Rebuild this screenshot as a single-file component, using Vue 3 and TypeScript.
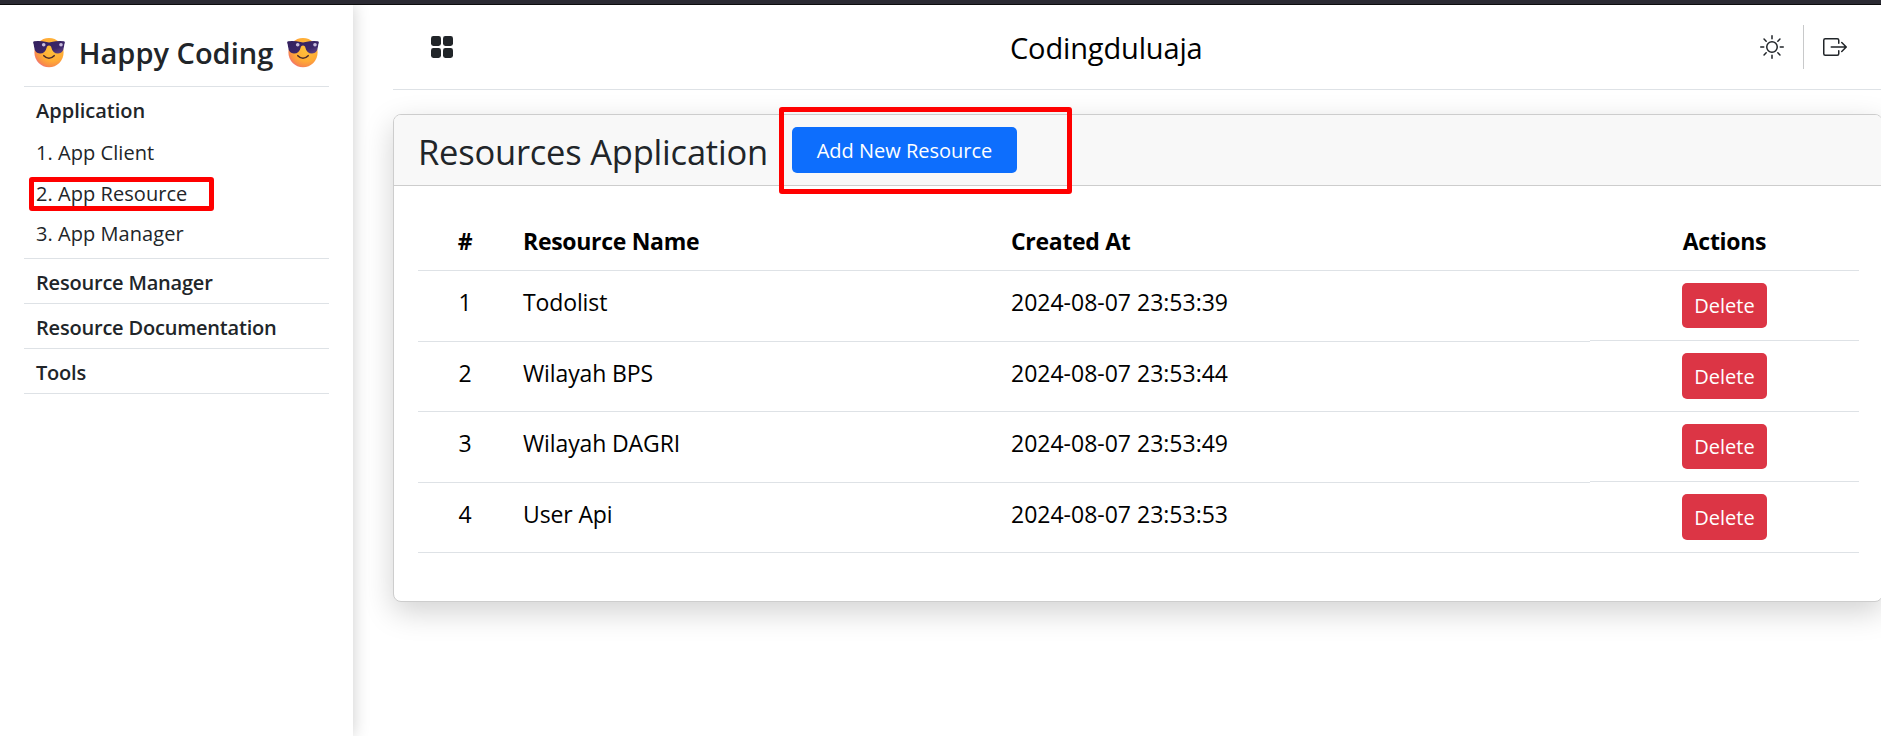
<script setup lang="ts">
interface Resource {
  id: number
  name: string
  createdAt: string
}

const appLinks: string[] = ['1. App Client', '2. App Resource', '3. App Manager']
const sections: string[] = ['Resource Manager', 'Resource Documentation', 'Tools']
const resources: Resource[] = [
  { id: 1, name: 'Todolist', createdAt: '2024-08-07 23:53:39' },
  { id: 2, name: 'Wilayah BPS', createdAt: '2024-08-07 23:53:44' },
  { id: 3, name: 'Wilayah DAGRI', createdAt: '2024-08-07 23:53:49' },
  { id: 4, name: 'User Api', createdAt: '2024-08-07 23:53:53' },
]
</script>

<template>
  <div class="page">
    <svg class="defs" width="0" height="0" aria-hidden="true">
      <defs>
        <radialGradient id="face" cx="62%" cy="38%" r="70%">
          <stop offset="0" stop-color="#ffc23a" />
          <stop offset=".6" stop-color="#ffab36" />
          <stop offset=".86" stop-color="#f88b4a" />
          <stop offset="1" stop-color="#ee6a86" />
        </radialGradient>
        <linearGradient id="lens" x1="0" y1="0" x2="1" y2="1">
          <stop offset="0" stop-color="#33205e" />
          <stop offset=".65" stop-color="#3c2668" />
          <stop offset="1" stop-color="#6a4b8e" />
        </linearGradient>
        <symbol id="cool" viewBox="0 0 32 30">
          <circle cx="16" cy="14.6" r="14.6" fill="url(#face)" />
          <path d="M1 3.2Q8 2.600 13.500 4Q16 4.800 18.500 4Q24 2.600 31 3.200Q32.200 3.600 31.700 5.200Q31.200 6 31 8.500Q30.200 15.500 25 15.500Q19.600 15.500 18 8.400Q16 6.600 14 8.400Q12.400 15.500 7 15.500Q1.800 15.500 1 8.500Q.8 6 .3 5.200Q-.2 3.600 1 3.200Z" fill="url(#lens)" />
          <circle cx="10.7" cy="6.800" r="1.8" fill="#c8bbdc" />
          <circle cx="28" cy="6.800" r="1.8" fill="#c8bbdc" />
          <path d="M10.8 17.700Q16 22.800 21.200 17.700" fill="none" stroke="#4b2b2b" stroke-width="1.6" stroke-linecap="round" />
        </symbol>
      </defs>
    </svg>

    <div class="chrome"></div>
    <div class="layout">
      <aside class="sidebar">
        <div class="brand">
          <svg class="emoji"><use href="#cool" /></svg>
          <span class="brand-name">Happy Coding</span>
          <svg class="emoji"><use href="#cool" /></svg>
        </div>
        <div class="group open">
          <div class="group-title">Application</div>
          <a v-for="(link, i) in appLinks" :key="link" class="link">
            {{ link }}
            <span v-if="i === 1" class="mark mark-link"></span>
          </a>
        </div>
        <div v-for="s in sections" :key="s" class="group">
          <div class="group-title tight">{{ s }}</div>
        </div>
      </aside>

      <main class="main">
        <header class="topbar">
          <svg class="menu" width="22" height="22" viewBox="0 0 22 22" fill="#212529">
            <rect x="0" y="0" width="10" height="10" rx="2.4" />
            <rect x="12" y="0" width="10" height="10" rx="2.4" />
            <rect x="0" y="12" width="10" height="10" rx="2.4" />
            <rect x="12" y="12" width="10" height="10" rx="2.4" />
          </svg>
          <div class="site">Codingduluaja</div>
          <div class="tools">
            <svg width="24" height="24" viewBox="0 0 16 16" fill="#212529">
              <path d="M8 11a3 3 0 1 1 0-6 3 3 0 0 1 0 6m0 1a4 4 0 1 0 0-8 4 4 0 0 0 0 8M8 0a.5.5 0 0 1 .5.5v2a.5.5 0 0 1-1 0v-2A.5.5 0 0 1 8 0m0 13a.5.5 0 0 1 .5.5v2a.5.5 0 0 1-1 0v-2A.5.5 0 0 1 8 13m8-5a.5.5 0 0 1-.5.5h-2a.5.5 0 0 1 0-1h2a.5.5 0 0 1 .5.5M3 8a.5.5 0 0 1-.5.5h-2a.5.5 0 0 1 0-1h2A.5.5 0 0 1 3 8m10.657-5.657a.5.5 0 0 1 0 .707l-1.414 1.415a.5.5 0 1 1-.707-.708l1.414-1.414a.5.5 0 0 1 .707 0m-9.193 9.193a.5.5 0 0 1 0 .707L3.05 13.657a.5.5 0 0 1-.707-.707l1.414-1.414a.5.5 0 0 1 .707 0m9.193 2.121a.5.5 0 0 1-.707 0l-1.414-1.414a.5.5 0 0 1 .707-.707l1.414 1.414a.5.5 0 0 1 0 .707M4.464 4.465a.5.5 0 0 1-.707 0L2.343 3.05a.5.5 0 1 1 .707-.707l1.414 1.414a.5.5 0 0 1 0 .708" />
            </svg>
            <span class="divider"></span>
            <svg width="24" height="24" viewBox="0 0 16 16" fill="#212529" fill-rule="evenodd">
              <path d="M10 12.5a.5.5 0 0 1-.5.5h-8a.5.5 0 0 1-.5-.5v-9a.5.5 0 0 1 .5-.5h8a.5.5 0 0 1 .5.5v2a.5.5 0 0 0 1 0v-2A1.5 1.5 0 0 0 9.5 2h-8A1.5 1.5 0 0 0 0 3.5v9A1.5 1.5 0 0 0 1.5 14h8a1.5 1.5 0 0 0 1.5-1.5v-2a.5.5 0 0 0-1 0z" />
              <path d="M15.854 8.354a.5.5 0 0 0 0-.708l-3-3a.5.5 0 0 0-.708.708L14.293 7.5H5.5a.5.5 0 0 0 0 1h8.793l-2.147 2.146a.5.5 0 0 0 .708.708z" />
            </svg>
          </div>
        </header>

        <section class="card">
          <div class="card-head">
            <h1 class="card-title">Resources Application</h1>
            <div class="add-wrap">
              <button class="btn add">Add New Resource</button>
              <span class="mark mark-add"></span>
            </div>
          </div>
          <div class="table">
            <div class="row head">
              <div class="cell num">#</div>
              <div class="cell name">Resource Name</div>
              <div class="cell">Created At</div>
              <div class="cell action">Actions</div>
            </div>
            <div v-for="r in resources" :key="r.id" class="row body">
              <div class="cell num">{{ r.id }}</div>
              <div class="cell name">{{ r.name }}</div>
              <div class="cell">{{ r.createdAt }}</div>
              <div class="cell action"><button class="btn delete">Delete</button></div>
            </div>
          </div>
        </section>
      </main>
    </div>
  </div>
</template>

<style>
body {
  margin: 0;
  overflow: hidden;
}
</style>

<style scoped>
.page,
.page * {
  box-sizing: border-box;
}
.page {
  width: 100vw;
  height: 100vh;
  overflow: hidden;
  background: #fff;
  color: #212529;
  font: 20px/30px "Segoe UI", "Open Sans", "Noto Sans", sans-serif;
}
.defs {
  position: absolute;
}
.chrome {
  height: 5px;
  background: #2b2a33;
  border-bottom: 1px solid #0c0c0d;
}
.layout {
  display: flex;
  height: calc(100vh - 5px);
  overflow: hidden;
}
.sidebar {
  flex: none;
  width: 353px;
  padding: 0 24px;
  box-shadow: 0 0 16px rgba(0, 0, 0, 0.2);
}
.brand {
  display: flex;
  align-items: center;
  height: 82px;
  padding: 14px 9px 0;
  border-bottom: 1px solid #dee2e6;
}
.brand-name {
  width: 222px;
  text-align: center;
  font-size: 29px;
  font-weight: 600;
  line-height: 36px;
}
.emoji {
  flex: none;
  width: 32px;
  height: 30px;
  margin-top: 1px;
}
.group {
  height: 45px;
  padding: 3px 12px 0;
  border-bottom: 1px solid #dee2e6;
}
.group.open {
  height: 172px;
}
.group-title {
  height: 43px;
  font-weight: 600;
  line-height: 42px;
}
.group-title.tight {
  letter-spacing: -0.2px;
}
.link {
  position: relative;
  display: block;
  height: 40.5px;
  line-height: 40.5px;
  letter-spacing: 0.05px;
}
.mark {
  position: absolute;
  border: 5px solid #f00;
  border-radius: 3px;
  pointer-events: none;
}
.mark-link {
  left: -7px;
  top: 3.5px;
  width: 185px;
  height: 34px;
}
.main {
  flex: none;
  width: 1530px;
  padding-left: 40px;
}
.topbar {
  display: flex;
  align-items: center;
  height: 85px;
  padding: 0 36px 0 38px;
  border-bottom: 1px solid #dee2e6;
}
.site {
  margin-left: 557px;
  padding-top: 2px;
  color: #000;
  font-size: 29px;
  line-height: 36px;
  letter-spacing: -0.15px;
}
.tools {
  display: flex;
  align-items: center;
  gap: 19px;
  margin-left: auto;
}
.divider {
  width: 1px;
  height: 44px;
  background: #c8c9ca;
}
.card {
  margin-top: 24px;
  border: 1px solid #cdcdcd;
  border-radius: 8px;
  background: #fff;
  box-shadow: 0 10px 30px rgba(0, 0, 0, 0.18);
}
.card-head {
  display: flex;
  align-items: center;
  height: 71px;
  padding: 0 24px;
  background: #f8f8f8;
  border-bottom: 1px solid #cdcdcd;
  border-radius: 7px 7px 0 0;
}
.card-title {
  width: 374px;
  margin: 3px 0 0;
  font-size: 34.5px;
  font-weight: 400;
  line-height: 44px;
  letter-spacing: -0.22px;
  white-space: nowrap;
}
.add-wrap {
  position: relative;
  height: 46px;
}
.btn {
  display: block;
  padding: 0;
  border: 0;
  border-radius: 5px;
  color: #fff;
  font: inherit;
}
.add {
  width: 225px;
  height: 46px;
  padding-top: 2px;
  background: #0d6efd;
  line-height: 44px;
}
.mark-add {
  left: -13px;
  top: -20px;
  width: 293px;
  height: 87px;
}
.table {
  padding: 26px 24px 48px;
  color: #000;
  font-size: 23px;
}
.row {
  display: grid;
  grid-template-columns: 94px 487px 591px 269px;
}
.cell {
  padding: 13px 12px 0;
  border-bottom: 1px solid #dee2e6;
  line-height: 36px;
}
.num {
  text-align: center;
}
.body .name {
  letter-spacing: -0.12px;
}
.cell.name {
  padding-left: 11px;
}
.head {
  height: 59px;
  font-weight: 700;
  letter-spacing: -0.3px;
}
.head .cell {
  padding-top: 11px;
}
.head .action {
  text-align: center;
}
.body {
  height: 71px;
}
.body:nth-child(odd) {
  height: 70px;
}
.body .action {
  display: flex;
  justify-content: center;
  padding: 12px 0;
  height: 70px;
}
.body:nth-child(odd) .action {
  height: 71px;
  margin-top: -1px;
}
.delete {
  width: 85px;
  height: 45px;
  padding-top: 1px;
  background: #dc3545;
  font-size: 20px;
  line-height: 44px;
}
.body:nth-child(odd) .delete {
  height: 46px;
}
</style>
